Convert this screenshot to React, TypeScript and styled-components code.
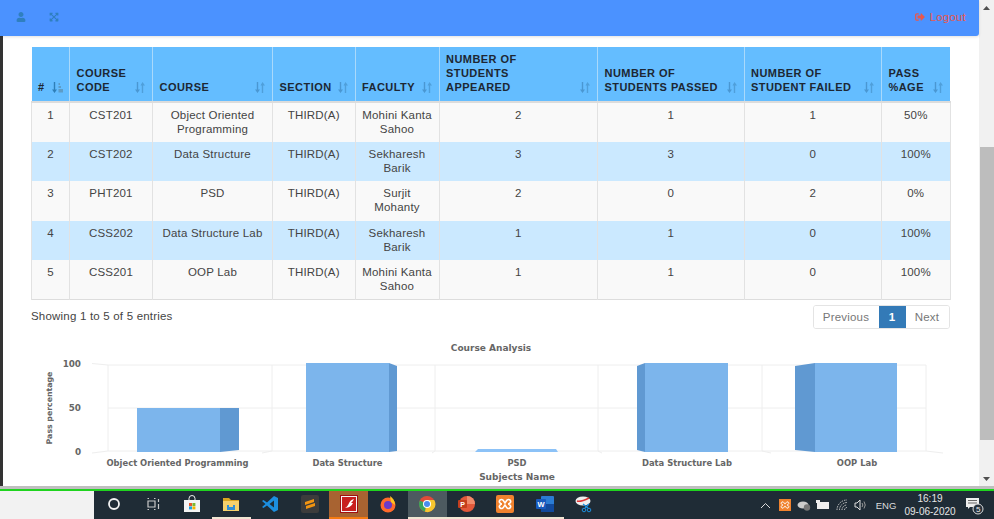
import React from "react";
import styled, { createGlobalStyle } from "styled-components";
import { FaUser, FaExpandArrowsAlt, FaSignOutAlt } from "react-icons/fa";

const Global = createGlobalStyle`
  html, body { margin: 0; padding: 0; background: #fff; overflow: hidden; }
  * { box-sizing: border-box; }
  body { font-family: "Liberation Sans", Arial, sans-serif; }
`;

const Page = styled.div`
  width: 994px;
  height: 519px;
  display: flex;
  flex-direction: column;
  overflow: hidden;
`;
const Window = styled.div`
  height: 486px;
  display: flex;
`;
const Main = styled.div`
  flex: 1;
  min-width: 0;
  display: flex;
  flex-direction: column;
`;
const Navbar = styled.header`
  height: 36px;
  flex: none;
  background: #4b92ff;
  border-bottom-right-radius: 3px;
  box-shadow: 0 1px 3px rgba(0, 0, 0, 0.12);
  display: flex;
  align-items: center;
  padding: 0 13px 2px 16px;
  gap: 23px;
  position: relative;
`;
const NavIcon = styled.span`
  color: #2f7fbf;
  font-size: 10px;
  width: 10px;
  display: flex;
  justify-content: center;
`;
const Logout = styled.a`
  margin-left: auto;
  color: #e8574c;
  font-size: 11.5px;
  letter-spacing: 0.2px;
  display: flex;
  align-items: center;
  gap: 5px;
`;
const Body = styled.div`
  flex: 1;
  display: flex;
  min-height: 0;
`;
const Strip = styled.div`
  width: 3px;
  background: #333;
`;
const Content = styled.main`
  flex: 1;
  min-width: 0;
  padding: 11px 29px 0 28px;
  display: flex;
  flex-direction: column;
`;
const Table = styled.table`
  width: 918.5px;
  table-layout: fixed;
  border-collapse: collapse;
  flex: none;
  border-bottom: 1px solid #ddd;
`;
const Col = styled.col<{ $w: number }>`
  width: ${(p) => p.$w}px;
`;
const Th = styled.th`
  background: #64bdff;
  height: 55px;
  padding: 0 6px 7px 6.5px;
  vertical-align: bottom;
  text-align: left;
  border-left: 1px solid #a9d9fb;
  border-bottom: 2px solid #dcdcdc;
  color: #1d2733;
  font-size: 11px;
  line-height: 14px;
  letter-spacing: 0.45px;
  font-weight: 700;
  &:first-child { border-left: none; }
`;
const HeadInner = styled.div`
  display: flex;
  justify-content: space-between;
  align-items: flex-end;
  gap: 2px;
`;
const SortSvg = styled.svg`
  flex: none;
  margin-bottom: 1px;
`;
const Tr = styled.tr<{ $blue: boolean }>`
  background: ${(p) => (p.$blue ? "#cbe9ff" : "#f9f9f9")};
  height: 39.5px;
`;
const Td = styled.td`
  padding: 5px 6px 0;
  vertical-align: top;
  text-align: center;
  border-left: 1px solid #e2e2e2;
  border-right: 1px solid #e2e2e2;
  color: #444;
  font-size: 11.5px;
  line-height: 14px;
  letter-spacing: 0.2px;
`;
const Footer = styled.div`
  height: 30px;
  margin-top: 5px;
  width: 918.5px;
  display: flex;
  justify-content: space-between;
  flex: none;
`;
const Info = styled.div`
  padding-top: 4px;
  font-size: 11.5px;
  line-height: 14px;
  letter-spacing: 0.2px;
  color: #444;
`;
const Pager = styled.nav`
  display: flex;
  height: 24px;
  border: 1px solid #e4e4e4;
  border-radius: 3px;
  overflow: hidden;
`;
const PageBtn = styled.span<{ $active?: boolean; $w: number }>`
  width: ${(p) => p.$w}px;
  display: flex;
  align-items: center;
  justify-content: center;
  font-size: 11.5px;
  letter-spacing: 0.2px;
  background: ${(p) => (p.$active ? "#337ab7" : "#fff")};
  color: ${(p) => (p.$active ? "#fff" : "#777")};
  font-weight: ${(p) => (p.$active ? 700 : 400)};
`;
const Chart = styled.svg`
  display: block;
  width: 976px;
  height: 151px;
  margin-left: -28px;
  flex: none;
  font-family: "DejaVu Sans", Verdana, sans-serif;
`;
const Scrollbar = styled.aside`
  width: 15px;
  background: #f1f1f1;
  display: flex;
  flex-direction: column;
  align-items: stretch;
`;
const Arrow = styled.div`
  height: 15px;
  display: flex;
  align-items: center;
  justify-content: center;
  flex: none;
`;
const Track = styled.div`
  flex: 1;
  padding: 132px 0 31px 1px;
  display: flex;
`;
const Thumb = styled.div`
  flex: 1;
  background: #bdbdbd;
`;
const Edge = styled.div`
  height: 3px;
  background: #bfbfbf;
`;
const Green = styled.div`
  height: 2px;
  background: #1fd41f;
`;
const Taskbar = styled.footer`
  height: 28px;
  display: flex;
  background: #1f2c36;
  color: #e8e8e8;
`;
const Search = styled.div`
  width: 94px;
  background: #f2f2f2;
`;
const Apps = styled.div`
  display: flex;
`;
const App39 = styled.div<{ $bg?: string; $bar?: string }>`
  width: 39.2px;
  height: 28px;
  display: flex;
  align-items: center;
  justify-content: center;
  background: ${(p) => p.$bg || "transparent"};
  border-bottom: 2px solid ${(p) => p.$bar || "transparent"};
`;
const Tray = styled.div`
  margin-left: auto;
  display: flex;
  align-items: center;
  padding-right: 9px;
`;
const TrayIcon = styled.div`
  width: 19px;
  display: flex;
  justify-content: center;
  align-items: center;
`;
const Lang = styled.div`
  width: 32px;
  font-size: 9.5px;
  text-align: center;
  color: #ddd;
`;
const Clock = styled.div`
  width: 52px;
  margin-left: 2px;
  text-align: center;
  font-size: 10px;
  line-height: 13px;
  color: #e6e6e6;
`;
const Notify = styled.div`
  margin-left: 9px;
  width: 20px;
  display: flex;
`;

const Sort = ({ on }: { on?: boolean }) => (
  <SortSvg width="11" height="11" viewBox="0 0 11 11">
    {on ? (
      <g>
        <path d="M1.800 0h1.400v7.500H5L2.500 11 0 7.500h1.800z" fill="#2f7fb8" />
        <path d="M6.500 1h1.500v2H6.500zM6.500 4h2.500v2H6.500zM6.500 7h4.500v3.500H6.500z" fill="#5d9cc7" />
      </g>
    ) : (
      <g>
        <path d="M1.800 0h1.400v7.500H5L2.500 11 0 7.500h1.800z" fill="#4a97d2" />
        <path d="M8.200 11H6.800V3.500H5.500L7.500 0l2.500 3.500H8.200z" fill="#4f9fda" />
      </g>
    )}
  </SortSvg>
);

const columns = [38, 83, 120, 82.5, 84, 158.5, 146.5, 137.5, 68.5];
const headers: string[][] = [
  ["#"],
  ["COURSE", "CODE"],
  ["COURSE"],
  ["SECTION"],
  ["FACULTY"],
  ["NUMBER OF", "STUDENTS", "APPEARED"],
  ["NUMBER OF", "STUDENTS PASSED"],
  ["NUMBER OF", "STUDENT FAILED"],
  ["PASS", "%AGE"],
];
const rows: string[][] = [
  ["1", "CST201", "Object Oriented Programming", "THIRD(A)", "Mohini Kanta Sahoo", "2", "1", "1", "50%"],
  ["2", "CST202", "Data Structure", "THIRD(A)", "Sekharesh Barik", "3", "3", "0", "100%"],
  ["3", "PHT201", "PSD", "THIRD(A)", "Surjit Mohanty", "2", "0", "2", "0%"],
  ["4", "CSS202", "Data Structure Lab", "THIRD(A)", "Sekharesh Barik", "1", "1", "0", "100%"],
  ["5", "CSS201", "OOP Lab", "THIRD(A)", "Mohini Kanta Sahoo", "1", "1", "0", "100%"],
];

const FRONT = "#7cb5ec";
const SIDE = "#6099d2";
const LINE = "#eeeeee";

const ChartView = () => (
  <Chart viewBox="3 335 976 151">
    {[365, 408, 451].map((y) => (
      <line key={y} x1="108" x2="926" y1={y} y2={y} stroke={LINE} />
    ))}
    {[108, 272, 435, 598, 762, 926].map((x) => (
      <line key={x} x1={x} x2={x} y1="365" y2="451" stroke={LINE} />
    ))}
    <path d="M92 363.500 108 365M92 453 108 451M262 453 272 451M432 453 435 451M598 451 602 453M762 451 771 453M926 451 943 453" stroke={LINE} fill="none" />
    <polygon points="220,408 239,408 239,450 220,452" fill={SIDE} />
    <rect x="137" y="408" width="83" height="44" fill={FRONT} />
    <polygon points="389,363 397,366 397,451 389,452" fill={SIDE} />
    <rect x="306" y="363" width="83" height="89" fill={FRONT} />
    <polygon points="478,449 556,449 558,452 475,452" fill="#8cc2f7" />
    <polygon points="645,363 637,366 637,450 645,452" fill={SIDE} />
    <rect x="645" y="363" width="83" height="89" fill={FRONT} />
    <polygon points="815,363 795,366 795,450 815,452" fill={SIDE} />
    <rect x="815" y="363" width="82" height="89" fill={FRONT} />
    <g fontWeight="700" fill="#666">
      <g fontSize="9">
        <text x="491" y="351" textAnchor="middle">Course Analysis</text>
        <text x="517" y="480" textAnchor="middle">Subjects Name</text>
      </g>
      <g fontSize="8.800">
        <text x="81" y="367" textAnchor="end">100</text>
        <text x="81" y="411" textAnchor="end">50</text>
        <text x="81" y="455" textAnchor="end">0</text>
      </g>
      <g fontSize="8.400">
        <text x="177.500" y="466" textAnchor="middle">Object Oriented Programming</text>
        <text x="347.500" y="466" textAnchor="middle">Data Structure</text>
        <text x="517" y="466" textAnchor="middle">PSD</text>
        <text x="687" y="466" textAnchor="middle">Data Structure Lab</text>
        <text x="857" y="466" textAnchor="middle">OOP Lab</text>
      </g>
      <text transform="translate(52 408) rotate(-90)" textAnchor="middle" fontSize="7.800">Pass percentage</text>
    </g>
  </Chart>
);

const Icon = ({ children, w = 18, h = 18 }: { children: React.ReactNode; w?: number; h?: number }) => (
  <svg width={w} height={h} viewBox={`0 0 ${w} ${h}`}>{children}</svg>
);

const taskApps: { key: string; bg?: string; bar?: string; icon: React.ReactNode }[] = [
  { key: "cortana", icon: <Icon><circle cx="9" cy="9" r="5" fill="none" stroke="#f2f2f2" strokeWidth="1.8" /></Icon> },
  { key: "view", icon: <Icon><path d="M3.500 3.500h1.500M10 3.500h1.500M3.500 14.500h1.500M10 14.500h1.500M4 6h7v6H4zM14.500 4v3M14.500 9v5" stroke="#c9c9c9" fill="none" strokeWidth="1.200" /></Icon> },
  { key: "store", icon: <Icon><path d="M6 5V3.500a3 3 0 0 1 6 0V5" fill="none" stroke="#eee" /><rect x="1" y="5" width="16" height="12" fill="#f4f4f4" /><rect x="6" y="8" width="3" height="3" fill="#e8542a" /><rect x="9.400" y="8" width="3" height="3" fill="#7cb82f" /><rect x="6" y="11.400" width="3" height="3" fill="#1ba1e2" /><rect x="9.400" y="11.400" width="3" height="3" fill="#f4b400" /></Icon> },
  { key: "files", bar: "#f0e6d2", icon: <Icon><path d="M1 3h6l2 2h8v2H1z" fill="#d9a520" /><rect x="1" y="6" width="16" height="10" fill="#f5d16b" /><rect x="5" y="10" width="8" height="5" fill="#2f8fd8" /><rect x="7" y="10" width="4" height="2" fill="#f5d16b" /></Icon> },
  { key: "vscode", icon: <Icon><path d="M13 1 17 3v12l-4 2-7-6.500L2.500 13 1 12l3.500-3L1 6l1.500-1L6 7.500z" fill="#1c8fe0" /><path d="M13 5.500v7L8.500 9z" fill="#1f2c36" /></Icon> },
  { key: "sublime", icon: <Icon><rect x="0" y="0" width="18" height="18" rx="2" fill="#3c3c3c" /><path d="M4 7l9-3v3L4 10zM5 11l9-3v3l-9 3z" fill="#f29411" /></Icon> },
  { key: "flash", bg: "#a86331", bar: "#f47a10", icon: <Icon><rect x="0.500" y="0.500" width="17" height="17" fill="#f4f4f4" stroke="#a01010" /><rect x="2" y="2" width="14" height="14" fill="#c81e1e" /><path d="M4 13C9 13 8 5 14 4c-1 2-2 3-3 4 1 0 2 0 2 0-1 2-3 5-9 5z" fill="#fff" /></Icon> },
  { key: "firefox", icon: <Icon><circle cx="9" cy="10" r="7.500" fill="#ff6a2b" /><circle cx="9" cy="10" r="4" fill="#6a3bc9" /><path d="M11 1c3 2 5 5 5 9l-4-3z" fill="#ffc520" /></Icon> },
  { key: "chrome", bg: "#4d5a60", bar: "#f0e6d2", icon: <Icon><circle cx="9" cy="9" r="8" fill="#de4b39" /><path d="M9 9 1.800 5.500A8 8 0 0 0 7 16.800z" fill="#3ba55c" /><path d="M9 5h7.200A8 8 0 0 1 7 16.800z" fill="#f7c62f" /><circle cx="9" cy="9" r="4" fill="#fff" /><circle cx="9" cy="9" r="3" fill="#4a8df0" /></Icon> },
  { key: "ppt", bar: "#f0e6d2", icon: <Icon><circle cx="10" cy="9" r="8" fill="#e2583a" /><path d="M10 1a8 8 0 0 1 8 8h-8z" fill="#f08a6a" /><rect x="1" y="5" width="9" height="8" rx="1" fill="#c43e1c" /><text x="3.200" y="11.500" fontSize="7" fontWeight="700" fill="#fff" fontFamily="Liberation Sans">P</text></Icon> },
  { key: "xampp", bar: "#f0e6d2", icon: <Icon><rect x="0" y="0" width="18" height="18" rx="2" fill="#f0822e" /><path d="M4 5c3-2 4 2 5 3 1-1 2-5 5-3 2 2-1 4-2 4 1 0 4 2 2 4-3 2-4-2-5-3-1 1-2 5-5 3-2-2 1-4 2-4-1 0-4-2-2-4z" fill="none" stroke="#fff" strokeWidth="1.600" /></Icon> },
  { key: "word", bar: "#f0e6d2", icon: <Icon><rect x="5" y="1" width="13" height="16" rx="1" fill="#2b7cd3" /><rect x="5" y="9" width="13" height="8" fill="#124a9c" /><rect x="0" y="4" width="10" height="10" rx="1" fill="#185abd" /><text x="1.400" y="12" fontSize="7.500" fontWeight="700" fill="#fff" fontFamily="Liberation Sans">W</text></Icon> },
  { key: "snip", icon: <Icon><ellipse cx="8" cy="6" rx="7.500" ry="4.500" fill="#eee" /><path d="M2 6c3 1 8-1 12-3" stroke="#d33" strokeWidth="1.500" fill="none" /><path d="M8 9l5 4M14 9l-4 4" stroke="#1c8fe0" strokeWidth="1.200" /><circle cx="9" cy="15" r="1.800" fill="none" stroke="#1c8fe0" /><circle cx="14" cy="15" r="1.800" fill="none" stroke="#1c8fe0" /></Icon> },
];

export default function App() {
  return (
    <Page>
      <Global />
      <Window>
        <Main>
          <Navbar>
            <NavIcon><FaUser /></NavIcon>
            <NavIcon><FaExpandArrowsAlt /></NavIcon>
            <Logout><FaSignOutAlt size={10} />Logout</Logout>
          </Navbar>
          <Body>
            <Strip />
            <Content>
              <Table>
                <colgroup>
                  {columns.map((w, i) => <Col key={i} $w={w} />)}
                </colgroup>
                <thead>
                  <tr>
                    {headers.map((h, i) => (
                      <Th key={i}>
                        <HeadInner>
                          <span>
                            {h.map((l, j) => <React.Fragment key={j}>{j > 0 && <br />}{l}</React.Fragment>)}
                          </span>
                          <Sort on={i === 0} />
                        </HeadInner>
                      </Th>
                    ))}
                  </tr>
                </thead>
                <tbody>
                  {rows.map((r, i) => (
                    <Tr key={i} $blue={i % 2 === 1}>
                      {r.map((c, j) => <Td key={j}>{c}</Td>)}
                    </Tr>
                  ))}
                </tbody>
              </Table>
              <Footer>
                <Info>Showing 1 to 5 of 5 entries</Info>
                <Pager>
                  <PageBtn $w={65}>Previous</PageBtn>
                  <PageBtn $w={27} $active>1</PageBtn>
                  <PageBtn $w={43}>Next</PageBtn>
                </Pager>
              </Footer>
              <ChartView />
            </Content>
          </Body>
        </Main>
        <Scrollbar>
          <Arrow><svg width="7" height="4"><path d="M3.500 0 7 4H0z" fill="#505050" /></svg></Arrow>
          <Track><Thumb /></Track>
          <Arrow><svg width="7" height="4"><path d="M0 0h7L3.500 4z" fill="#505050" /></svg></Arrow>
        </Scrollbar>
      </Window>
      <Edge />
      <Green />
      <Taskbar>
        <Search />
        <Apps>
          {taskApps.map((a) => (
            <App39 key={a.key} $bg={a.bg} $bar={a.bar}>{a.icon}</App39>
          ))}
        </Apps>
        <Tray>
          <TrayIcon><svg width="11" height="7"><path d="M1 6 5.500 1.500 10 6" fill="none" stroke="#ddd" /></svg></TrayIcon>
          <TrayIcon><Icon w={12} h={12}><rect width="12" height="12" fill="#f0822e" /><path d="M3 3c2-1 2 2 3 2 1 0 1-3 3-2s0 3-1 3c1 0 3 2 1 3s-2-2-3-2c-1 0-1 3-3 2s0-3 1-3c-1 0-3-2-1-3z" fill="none" stroke="#fff" /></Icon></TrayIcon>
          <TrayIcon><Icon w={14} h={12}><ellipse cx="6" cy="6" rx="5.500" ry="3.500" fill="#ccc" /><circle cx="10" cy="8.500" r="3.200" fill="#777" /></Icon></TrayIcon>
          <TrayIcon><Icon w={14} h={10}><rect x="1" y="2" width="12" height="7" fill="#eee" /><rect x="0" y="0" width="4" height="3" fill="#eee" /></Icon></TrayIcon>
          <TrayIcon><Icon w={12} h={12}><path d="M1 11a10 10 0 0 1 10-10M3.500 11A7.500 7.500 0 0 1 11 3.500M6 11a5 5 0 0 1 5-5M8.500 11A2.500 2.500 0 0 1 11 8.500" fill="none" stroke="#ccc" strokeDasharray="1.500 1" /></Icon></TrayIcon>
          <TrayIcon><Icon w={13} h={12}><path d="M1 4h2l3-3v10L3 8H1z" fill="none" stroke="#ddd" /><path d="M8 4a3 3 0 0 1 0 4M10 2.500a6 6 0 0 1 0 7" fill="none" stroke="#999" /></Icon></TrayIcon>
          <Lang>ENG</Lang>
          <Clock>16:19<br />09-06-2020</Clock>
          <Notify><Icon w={20} h={22}><path d="M1 4h13v9H5l-2 2v-2H1z" fill="#eee" /><path d="M3 6.500h9M3 9h9" stroke="#666" /><circle cx="13" cy="15" r="5" fill="#26323c" stroke="#ddd" /><text x="11" y="18" fontSize="8" fill="#eee" fontFamily="Liberation Sans">5</text></Icon></Notify>
        </Tray>
      </Taskbar>
    </Page>
  );
}
